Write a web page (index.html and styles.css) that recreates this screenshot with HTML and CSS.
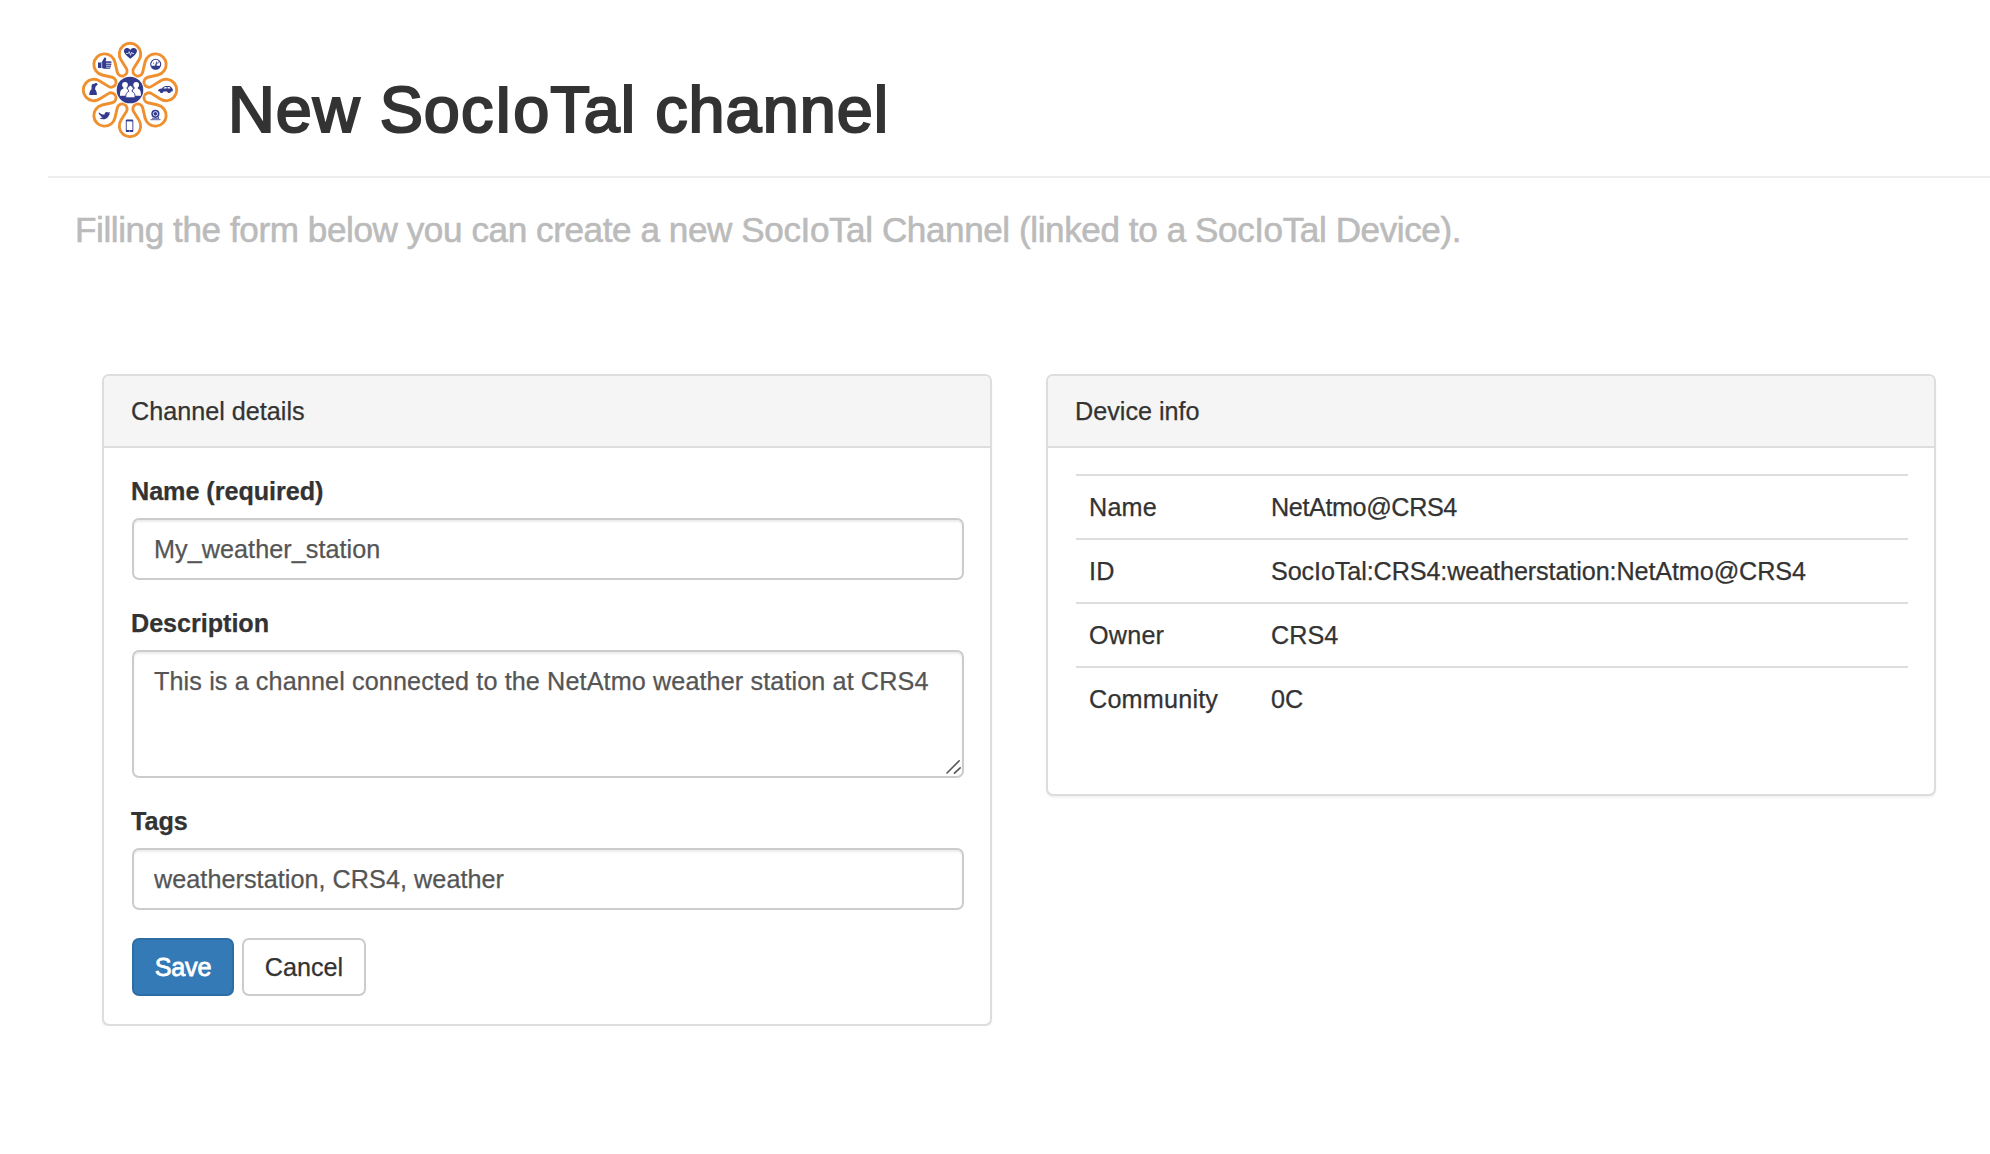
FILE: index.html
```html
<!DOCTYPE html>
<html lang="en">
<head>
<meta charset="utf-8">
<title>New SocIoTal channel</title>
<link rel="stylesheet" href="styles.css">
</head>
<body>
<header class="page-header">
  <svg class="logo" viewBox="-50 -50 100 100" aria-hidden="true">
    <defs>
      <path id="petal" d="M-5.93-14.32A5 5 0 0 0-3.61-21.59L-9.07-30.33A10.7 10.7 0 1 1 9.07-30.33L3.61-21.59A5 5 0 0 0 5.93-14.32"/>
    </defs>
    <g class="petals">
      <use href="#petal"/>
      <use href="#petal" transform="rotate(45)"/>
      <use href="#petal" transform="rotate(90)"/>
      <use href="#petal" transform="rotate(135)"/>
      <use href="#petal" transform="rotate(180)"/>
      <use href="#petal" transform="rotate(225)"/>
      <use href="#petal" transform="rotate(270)"/>
      <use href="#petal" transform="rotate(315)"/>
    </g>
    <circle class="ink" r="13.3"/>
    <g class="paper">
      <circle cx="-5" cy="-5.200" r="2.900"/>
      <circle cx="6.200" cy="-5.200" r="2.900"/>
      <path d="M-10 5.800C-10 1.500-9.300-.4-6.500-1.400V-4H-3.500V-1.400L-2-.6V5.800ZM11 5.800C11 1.500 10.300-.4 7.700-1.400V-4H4.700V-1.400L3-.6V5.800Z"/>
    </g>
    <path class="person" d="M-4.300 7.800C-4.300 4-3.600 2.400-1.400 1.500V.6A2.800 2.800 0 1 1 2.200.6V1.500C4.400 2.400 5.100 4 5.100 7.800Z"/>
    <!-- heart -->
    <path class="ink" d="M.4-31.200C-3-34-6.200-36.500-6-39.300-5.700-42.400-1.600-42.900.3-40 2.200-42.900 6.600-42.400 6.900-39.300 7.100-36.500 3.800-34 .4-31.200Z"/>
    <path class="hair" d="M-4-36.500H-1.700L-.8-38.400.6-34.700 1.700-37.800 2.400-36.500H4"/>
    <!-- gauge -->
    <circle class="ink-line" cx="25.700" cy="-25.700" r="5"/>
    <path class="ink" d="M21-24.300H30.400C29.500-21.700 27.800-20.700 25.700-20.700S21.900-21.700 21-24.300ZM25-24.300 26.300-28.500 27-28.200 26.600-24.300Z"/>
    <path class="ink-line thin" d="M23-27.300 24.200-26.200M28.500-28.500 27.700-26.200"/>
    <!-- car -->
    <path class="ink" d="M28 0.900C28-.8 29.500-1.400 31.800-1.600 33.600-3.400 34.800-4 37.500-4 40.200-4 41.300-3.400 42-1.700 43-1 43 .2 42.500 1.500H40.800A1.900 1.900 0 0 1 37.200 1.500H33.400A1.900 1.900 0 0 1 29.800 1.500Z"/>
    <path class="paper" d="M33.200-1.600 35-3.100H36.700V-1.600ZM37.600-1.600V-3.100H39.500L40.500-1.600Z"/>
    <circle class="ink" cx="31.600" cy="1.500" r="1.500"/>
    <circle class="ink" cx="39" cy="1.500" r="1.500"/>
    <!-- webcam -->
    <circle class="ink" cx="25.400" cy="23.800" r="4.100"/>
    <circle class="paper-line" cx="25.400" cy="23.800" r="2.200"/>
    <path class="ink-line thin" d="M20.500 29.700H30.500M22 28.300H29L28 26.800"/>
    <!-- phone -->
    <rect class="ink" x="-4.200" y="29.600" width="7.500" height="12.500" rx="1.200"/>
    <rect class="paper" x="-3.300" y="31.400" width="5.700" height="8.600"/>
    <circle class="paper" cx="-.4" cy="41" r=".5"/>
    <!-- bird -->
    <path class="ink" d="M-31.200 22.300C-28.500 24.800-26.800 24.800-25.500 24.400-25.300 21.800-23.100 21.300-21.700 22.500L-19.800 22-20.800 23.600-20 23.900-21 24.900C-21.500 28-26 30.600-30.500 28.200-29 28.200-28 27.800-27.300 27.100-28.700 26.900-29.300 26.300-29.500 25.500-30.900 24.800-31.400 23.700-31.200 22.300Z"/>
    <!-- flask figure -->
    <path class="ink" d="M-38.400-3.800A2 2 0 0 1-35.500-6L-34-7-32.800-5.500-34-4.300-34.600-2.800-35-.8C-33.500.5-33.100 3-33.100 5H-40.700C-40.700 3-40.400.5-38.500-.8Z"/>
    <circle class="ink" cx="-34" cy="-5.700" r="1.400"/>
    <!-- thumb -->
    <path class="ink" d="M-32-27.600H-28.500L-25.500-32.500C-23.500-32.700-23.300-30.600-24.600-28.700H-19.300C-18.300-28.600-18.300-27-19-26.700-18.300-26.200-18.500-25-19.200-24.700-18.700-24.100-19-23-19.700-22.700-19.400-21.900-19.800-21.200-20.800-21.200H-26L-28-22H-32Z"/>
    <path class="hair" d="M-28.300-27.500V-22M-24-26.700H-19M-24-24.700H-19.200M-24-22.800H-19.700"/>
  </svg>
  <h1 class="page-title">New SocIoTal channel</h1>
</header>

<p class="lead">Filling the form below you can create a new SocIoTal Channel (linked to a SocIoTal Device).</p>

<main class="columns">
  <section class="panel">
    <div class="panel-heading">Channel details</div>
    <form class="panel-body">
      <div class="form-group">
        <label for="name">Name (required)</label>
        <input class="form-control" id="name" type="text" value="My_weather_station">
      </div>
      <div class="form-group">
        <label for="description">Description</label>
        <div class="textarea-wrap">
          <textarea class="form-control" id="description">This is a channel connected to the NetAtmo weather station at CRS4</textarea>
          <svg class="grip" viewBox="0 0 16 16" aria-hidden="true"><path d="M1 14 13.200 1.800M8.500 14.200 14.200 8.800"/></svg>
        </div>
      </div>
      <div class="form-group">
        <label for="tags">Tags</label>
        <input class="form-control" id="tags" type="text" value="weatherstation, CRS4, weather">
      </div>
      <div class="actions">
        <button class="btn btn-primary" type="button">Save</button>
        <button class="btn btn-default" type="button">Cancel</button>
      </div>
    </form>
  </section>

  <section class="panel">
    <div class="panel-heading">Device info</div>
    <dl class="info">
      <div class="info-row"><dt>Name</dt><dd class="device-name">NetAtmo@CRS4</dd></div>
      <div class="info-row"><dt>ID</dt><dd class="device-id">SocIoTal:CRS4:weatherstation:NetAtmo@CRS4</dd></div>
      <div class="info-row"><dt>Owner</dt><dd>CRS4</dd></div>
      <div class="info-row"><dt>Community</dt><dd>0C</dd></div>
    </dl>
  </section>
</main>
</body>
</html>
```

FILE: styles.css
```css
* { box-sizing: border-box; }

body {
  margin: 0;
  background: #fff;
  color: #333;
  font: 25.2px/36px "Helvetica Neue", Helvetica, "Liberation Sans", Arial, sans-serif;
  letter-spacing: 0;
  -webkit-text-stroke: 0.25px currentColor;
}

.page-header {
  display: flex;
  align-items: flex-start;
  height: 178px;
  margin-left: 48px;
  padding: 40px 0 0 32px;
  border-bottom: 2px solid #eee;
}

.logo { flex: none; width: 100px; height: 100px; }
.petals { fill: none; stroke: #ef9030; stroke-width: 2.9; }
.ink { fill: #313a8c; }
.paper { fill: #fff; }
.person { fill: #fff; stroke: #313a8c; stroke-width: 0.9; }
.ink-line { fill: none; stroke: #313a8c; stroke-width: 1.1; }
.paper-line { fill: none; stroke: #fff; stroke-width: 0.8; }
.thin { stroke-width: 0.8; }
.hair { fill: none; stroke: #fff; stroke-width: 0.7; }

.page-title {
  margin: 34px 0 0 48px;
  font-size: 64.8px;
  font-weight: 400;
  line-height: 71px;
  letter-spacing: 1px;
  -webkit-text-stroke: 2.2px #333;
}

.lead {
  margin: 33px 0 0 75px;
  color: #bbb;
  font-size: 35.1px;
  line-height: 38px;
  letter-spacing: -0.41px;
  white-space: nowrap;
  -webkit-text-stroke: 0.6px #bbb;
}

.columns {
  display: grid;
  grid-template-columns: 890px 890px;
  gap: 54px;
  align-items: start;
  margin: 125px 0 0 102px;
}

.panel {
  border: 2px solid #ddd;
  border-radius: 7px;
  background: #fff;
  box-shadow: 0 2px 2px rgba(0, 0, 0, 0.05);
}

.panel-heading {
  height: 72px;
  padding: 17px 27px;
  border-bottom: 2px solid #ddd;
  border-radius: 5px 5px 0 0;
  background: #f5f5f5;
}

.panel-body { padding: 25px 26px 28px 28px; }

.form-group { margin-bottom: 25px; }

label {
  display: block;
  margin: 0 0 9px -1px;
  font-weight: 700;
  letter-spacing: -0.05px;
}

.form-control {
  display: block;
  width: 832px;
  height: 62px;
  margin: 0;
  padding: 10px 20px;
  border: 2px solid #ccc;
  border-radius: 7px;
  background: #fff;
  box-shadow: inset 0 2px 2px rgba(0, 0, 0, 0.075);
  color: #555;
  font: inherit;
  letter-spacing: 0.05px;
}

.textarea-wrap { position: relative; }

textarea.form-control {
  height: 128px;
  padding-top: 11px;
  letter-spacing: 0.11px;
  resize: none;
  overflow: hidden;
}

.grip {
  position: absolute;
  right: 2px;
  bottom: 3px;
  width: 16px;
  height: 16px;
  fill: none;
  stroke: #555;
  stroke-width: 1.6;
  stroke-linecap: round;
}

.actions { display: flex; gap: 8px; padding-top: 3px; }

.btn {
  height: 58px;
  padding: 0;
  border: 2px solid #ccc;
  border-radius: 7px;
  background: #fff;
  color: #333;
  font: inherit;
}

.btn-primary {
  width: 102px;
  border-color: #2e6da4;
  background: #337ab7;
  color: #fff;
  letter-spacing: -0.2px;
  -webkit-text-stroke: 0.8px #fff;
}

.btn-default { width: 124px; }

.info { margin: 0; padding: 26px 26px 64px 28px; }

.info-row {
  display: grid;
  grid-template-columns: 182px 1fr;
  padding: 13px 0 13px 13px;
  border-top: 2px solid #ddd;
}

.info-row dt, .info-row dd { margin: 0; }
.info-row dt { letter-spacing: 0.2px; }
.device-name { letter-spacing: -0.4px; }
.device-id { letter-spacing: -0.11px; }
```
